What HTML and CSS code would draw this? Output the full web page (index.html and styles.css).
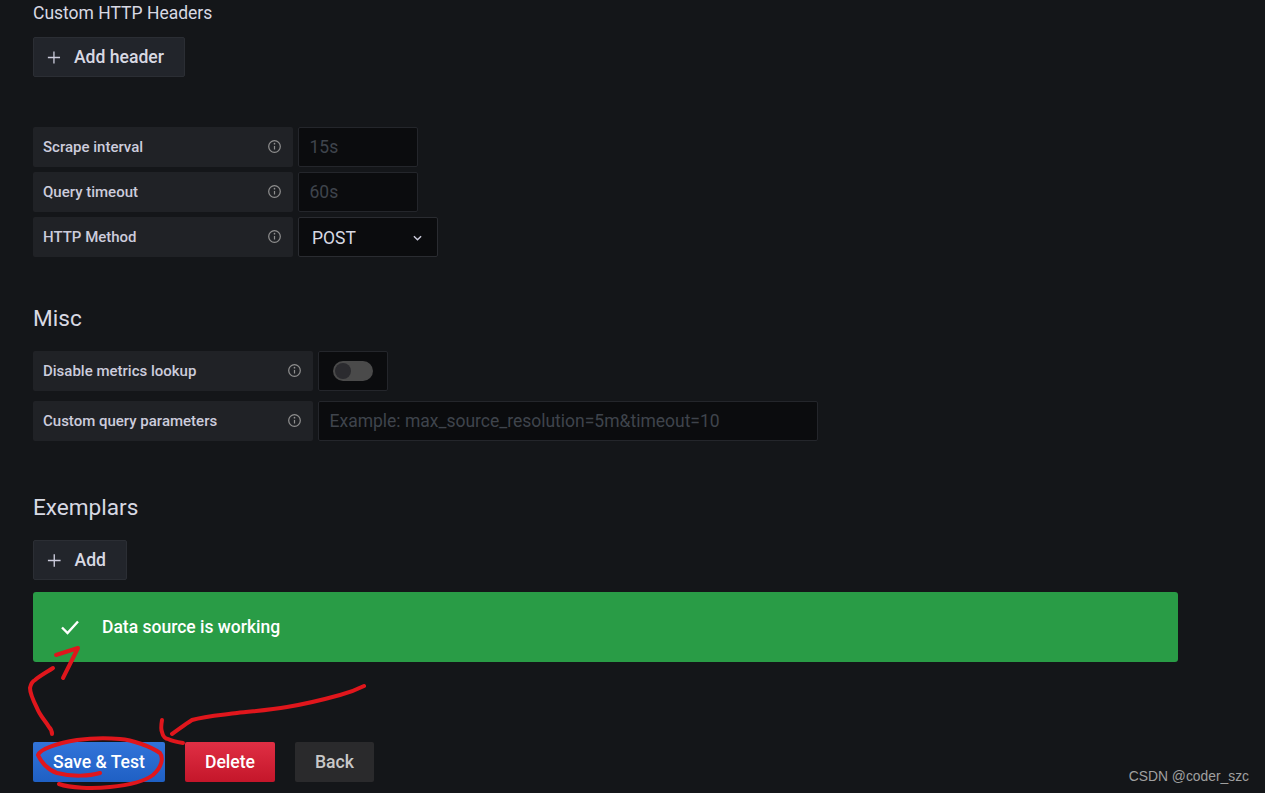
FILE: index.html
```html
<!DOCTYPE html>
<html lang="en">
<head>
<meta charset="utf-8">
<title>Data source settings</title>
<link rel="stylesheet" href="styles.css">
</head>
<body>
<main class="page">
  <div class="sub-title">Custom HTTP Headers</div>
  <button class="btn btn-secondary btn-header"><svg class="plus" viewBox="0 0 16 16"><path d="M8 1v14M1 8h14"/></svg>Add header</button>

  <section class="rows rows-prom">
    <div class="row">
      <div class="label label-260"><span>Scrape interval</span><svg class="info" viewBox="0 0 16 16"><circle cx="8" cy="8" r="6.2"/><path d="M8 7.4v3.8"/><circle class="dot" cx="8" cy="5" r=".9"/></svg></div>
      <div class="input input-120 placeholder">15s</div>
    </div>
    <div class="row">
      <div class="label label-260"><span>Query timeout</span><svg class="info" viewBox="0 0 16 16"><circle cx="8" cy="8" r="6.2"/><path d="M8 7.4v3.8"/><circle class="dot" cx="8" cy="5" r=".9"/></svg></div>
      <div class="input input-120 placeholder">60s</div>
    </div>
    <div class="row">
      <div class="label label-260"><span>HTTP Method</span><svg class="info" viewBox="0 0 16 16"><circle cx="8" cy="8" r="6.2"/><path d="M8 7.4v3.8"/><circle class="dot" cx="8" cy="5" r=".9"/></svg></div>
      <div class="input select"><span class="select-value">POST</span><svg class="chev" viewBox="0 0 10 6"><path d="M1 1l4 4 4-4"/></svg></div>
    </div>
  </section>

  <h3 class="heading heading-misc">Misc</h3>
  <section class="rows rows-misc">
    <div class="row">
      <div class="label label-280"><span>Disable metrics lookup</span><svg class="info" viewBox="0 0 16 16"><circle cx="8" cy="8" r="6.2"/><path d="M8 7.4v3.8"/><circle class="dot" cx="8" cy="5" r=".9"/></svg></div>
      <div class="input switch-box"><div class="switch"><div class="knob"></div></div></div>
    </div>
    <div class="row">
      <div class="label label-280"><span>Custom query parameters</span><svg class="info" viewBox="0 0 16 16"><circle cx="8" cy="8" r="6.2"/><path d="M8 7.4v3.8"/><circle class="dot" cx="8" cy="5" r=".9"/></svg></div>
      <div class="input input-500 placeholder">Example: max_source_resolution=5m&amp;timeout=10</div>
    </div>
  </section>

  <h3 class="heading heading-ex">Exemplars</h3>
  <button class="btn btn-secondary btn-add"><svg class="plus" viewBox="0 0 16 16"><path d="M8 1v14M1 8h14"/></svg>Add</button>

  <div class="alert">
    <svg class="check" viewBox="0 0 20 16"><path d="M2 8.5l5.5 5.5L18 2.5"/></svg>
    <span>Data source is working</span>
  </div>

  <div class="actions">
    <button class="btn btn-primary">Save &amp; Test</button>
    <button class="btn btn-danger">Delete</button>
    <button class="btn btn-back">Back</button>
  </div>
</main>

<svg class="marks" viewBox="0 0 1265 793">
  <path d="M100 773C90 776 72 777 57 773C48 770 41 762 38 755C40 749 58 743 77 740C92 738 108 738 120 739C132 740 150 746 160 753C163 757 163 766 153 775C145 781 130 785 110 787C92 789 70 788 59 784"/>
  <path d="M52 734C52 730 50 728 49 727C45 720 40 716 37 708C33 700 30 694 30 688C31 683 33 681 35 680C41 675 47 672 53 668"/>
  <path d="M56 655L78 648L63 678"/>
  <path d="M364 686C356 690 348 693 340 695C322 700 305 704 287 707C270 710 254 711 237 713C222 715 205 716 192 720C184 725 178 730 172 734"/>
  <path d="M162 720C161 726 161 730 162 732C163 737 166 739 168 739C172 741 177 742 183 743"/>
</svg>
<div class="watermark">CSDN @coder_szc</div>
</body>
</html>
```
FILE: styles.css
```css
* { box-sizing: border-box; }
html, body { margin: 0; height: 793px; overflow: hidden; }
body {
  background: #141619;
  color: #ccccdc;
  font-family: Roboto, "Liberation Sans", sans-serif;
  font-size: 15px;
  position: relative;
}
.page { padding: 1px 0 0 33px; }
.sub-title { font-size: 17.5px; line-height: 24px; color: #d8d9e3; }

.btn {
  display: flex;
  align-items: center;
  height: 40px;
  border: 0;
  border-radius: 2px;
  font-family: inherit;
  font-size: 17.6px;
  font-weight: 500;
  white-space: nowrap;
  padding: 0 20px;
}
.btn-secondary {
  background: #22252b;
  border: 1px solid #2b2e34;
  color: #d8d9e3;
  padding: 0 20px 0 13px;
}
.btn-header { width: 152px; margin-top: 12px; }
.btn-add { width: 94px; margin-top: 18px; }
.plus { width: 15px; height: 15px; margin-right: 13px; fill: none; stroke: #ccccdc; stroke-width: 1.5; }

.rows { display: flex; flex-direction: column; }
.rows-prom { margin-top: 50px; gap: 5px; }
.rows-misc { margin-top: 18px; gap: 10px; }
.row { display: flex; gap: 5px; height: 40px; }
.label {
  display: flex;
  align-items: center;
  justify-content: space-between;
  height: 40px;
  padding: 0 11px 0 10px;
  background: #202226;
  border-radius: 2px;
  font-weight: 500;
  color: #ccccdc;
}
.label span { margin-bottom: 1px; }
.label-260 { width: 260px; }
.label-280 { width: 280px; }
.info { width: 15px; height: 15px; margin-bottom: 1px; fill: none; stroke: #8e8e8e; stroke-width: 1.3; }
.info .dot { fill: #8e8e8e; stroke: none; }

.input {
  display: flex;
  align-items: center;
  height: 40px;
  background: #0b0c0e;
  border: 1px solid #24262b;
  border-radius: 2px;
  font-size: 17.5px;
  color: #d8d9e3;
}
.placeholder { color: #3f444c; padding-left: 10.5px; }
.input-120 { width: 120px; }
.input-500 { width: 500px; }
.select { width: 140px; padding: 0 15px 0 13px; justify-content: space-between; border-color: #2a2c31; }
.select-value { margin-top: 1px; }
.chev { width: 9px; height: 6px; margin-top: 1px; fill: none; stroke: #ccccdc; stroke-width: 1.6; }
.switch-box { width: 70px; justify-content: center; }
.switch { width: 40px; height: 20px; border-radius: 10px; background: #4a4a4a; padding: 2px; }
.knob { width: 16px; height: 16px; border-radius: 50%; background: #2b2b2f; }

.heading { margin: 0; font-size: 22.6px; font-weight: 400; line-height: 28px; color: #d8d9e3; }
.heading-misc { margin-top: 48px; }
.heading-ex { margin-top: 53px; }

.alert {
  display: flex;
  align-items: center;
  width: 1145px;
  height: 70px;
  margin-top: 12px;
  padding-left: 27px;
  background: #299c46;
  border-radius: 3px;
  color: #fff;
  font-size: 17.5px;
  font-weight: 500;
}
.check { width: 20px; height: 16px; margin-right: 22px; fill: none; stroke: #fff; stroke-width: 2.4; }

.actions { display: flex; gap: 20px; margin-top: 80px; }
.btn-primary { background: linear-gradient(#3274d9, #1f60c4); color: #fff; width: 132px; justify-content: center; padding: 0; }
.btn-danger { background: linear-gradient(#e02f44, #c4162a); color: #fff; width: 90px; justify-content: center; padding: 0; }
.btn-back { background: #2a2a2c; color: #c8c8c8; width: 79px; justify-content: center; padding: 0; }

.marks { position: absolute; left: 0; top: 0; width: 1265px; height: 793px; fill: none; stroke: #e0161c; stroke-width: 4; stroke-linecap: round; stroke-linejoin: round; pointer-events: none; }
.watermark { position: absolute; right: 16px; top: 768px; font-family: "Liberation Sans", sans-serif; font-size: 13.85px; line-height: 17px; color: #a0a0a0; }
```
